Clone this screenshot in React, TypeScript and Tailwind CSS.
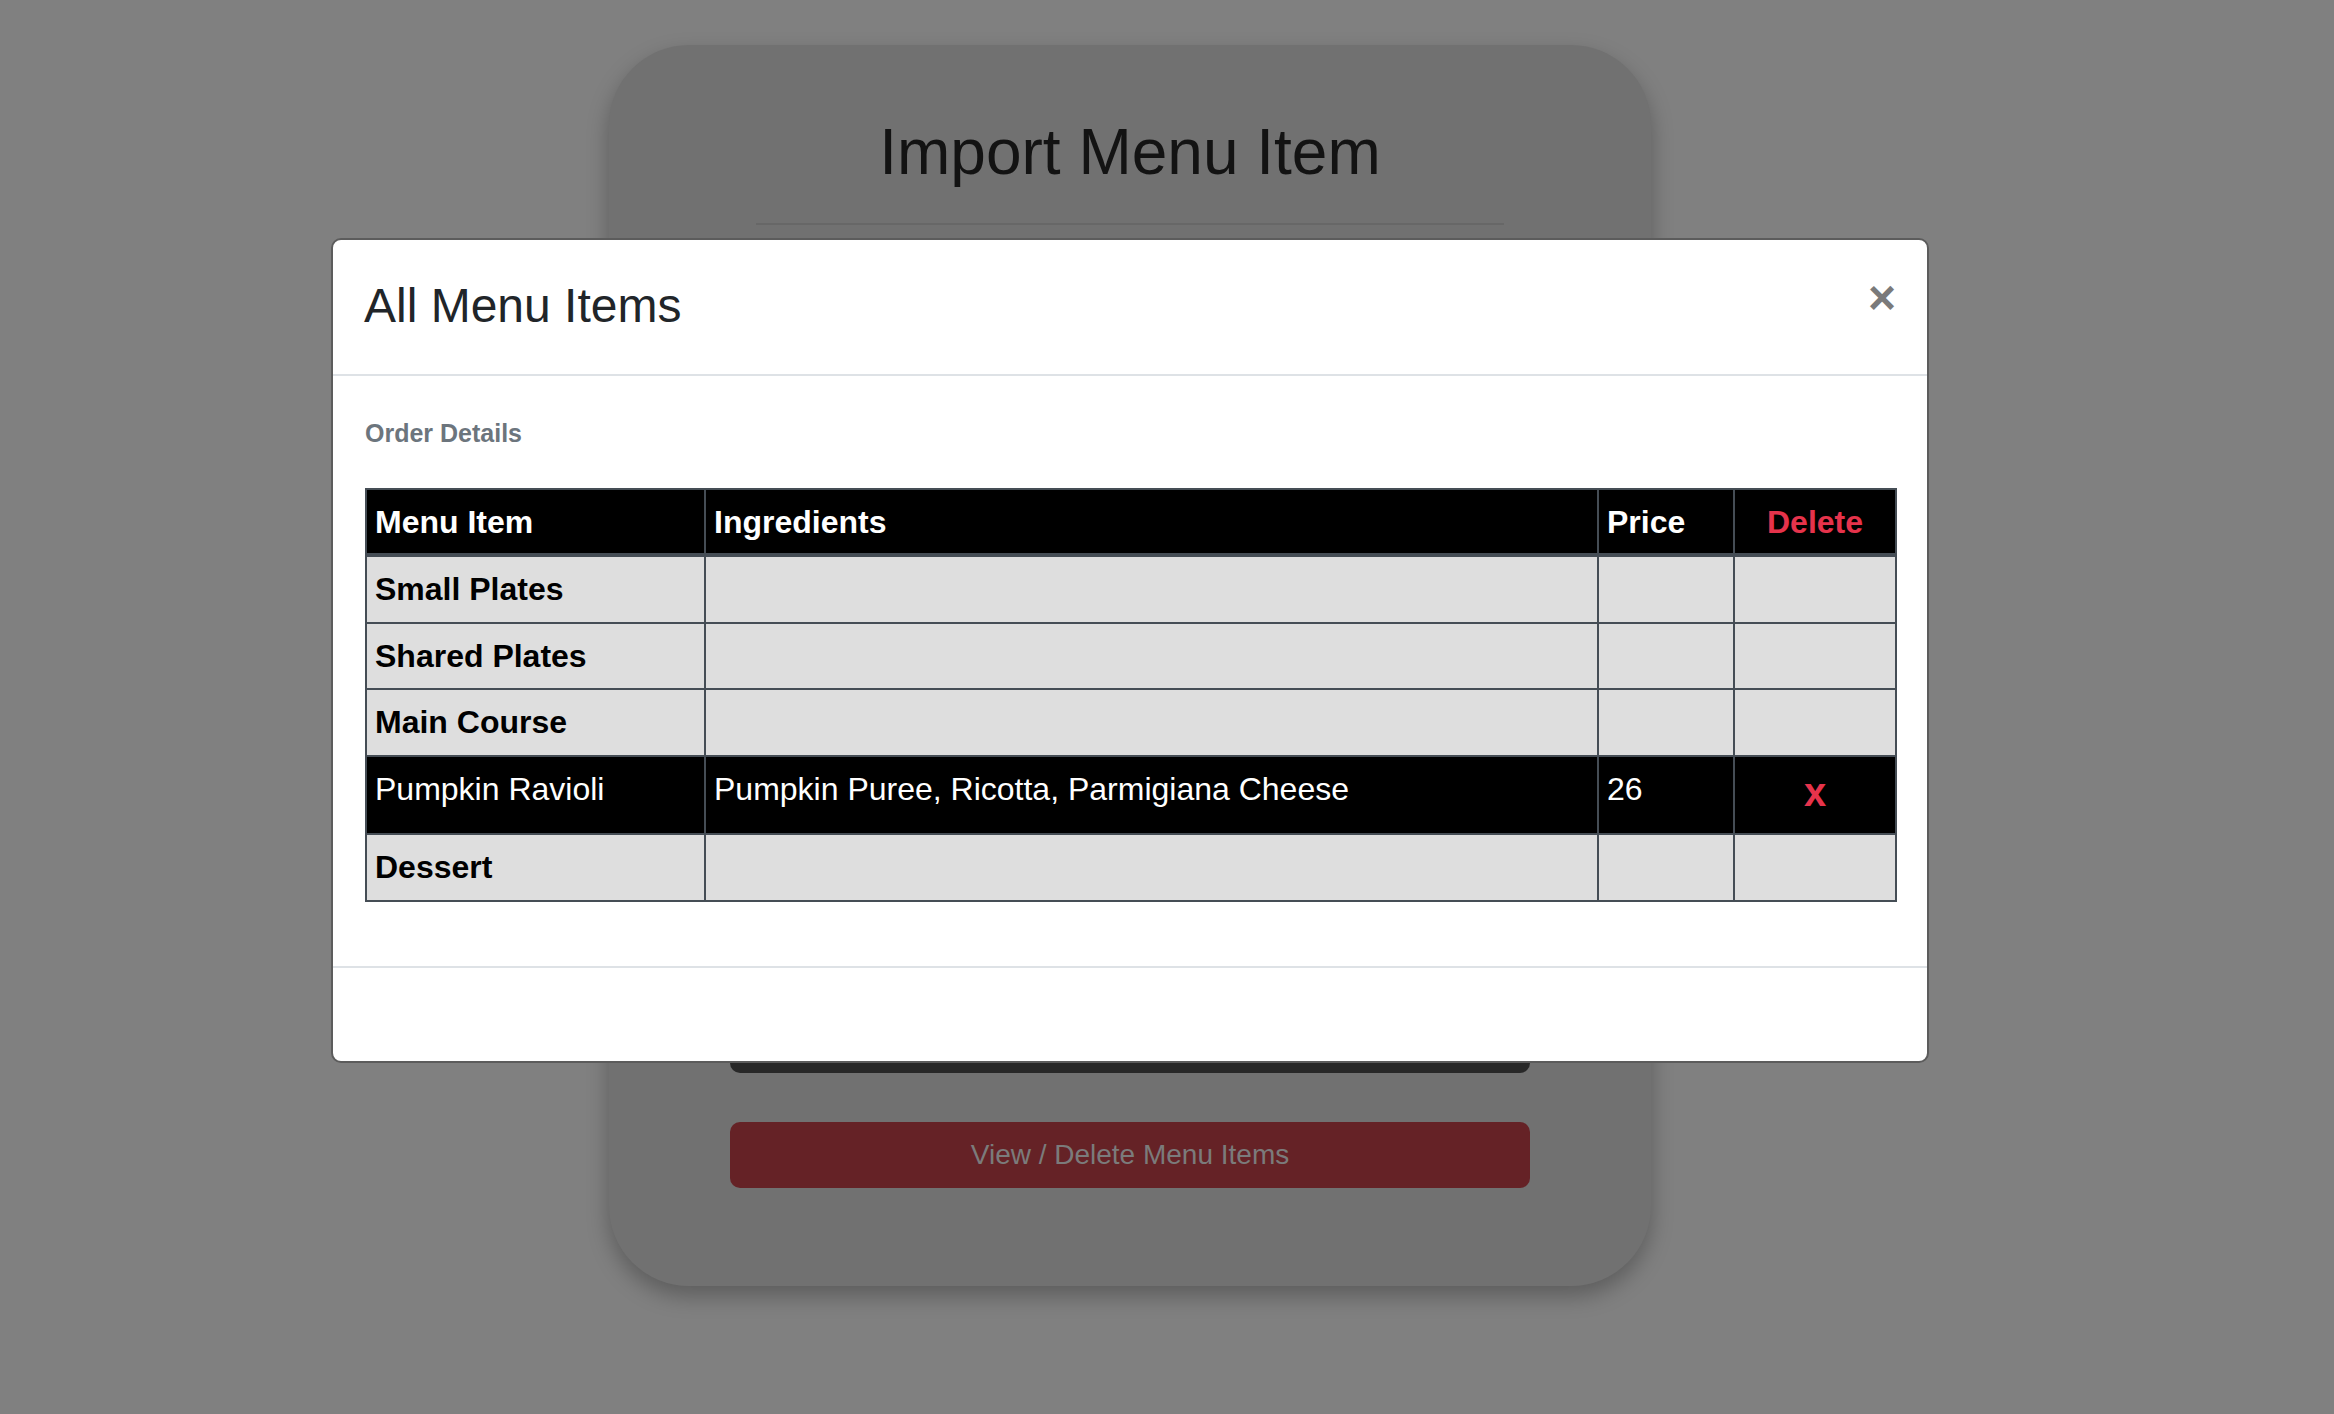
import React from "react";

type Row = {
  item: string;
  ingredients?: string;
  price?: string;
  category: boolean;
};

const ROWS: Row[] = [
  { item: "Small Plates", category: true },
  { item: "Shared Plates", category: true },
  { item: "Main Course", category: true },
  {
    item: "Pumpkin Ravioli",
    ingredients: "Pumpkin Puree, Ricotta, Parmigiana Cheese",
    price: "26",
    category: false,
  },
  { item: "Dessert", category: true },
];

function MenuTable() {
  return (
    <table className="w-full table-fixed border-collapse border-2 border-[#454d55] text-[32px] leading-[48px]">
      <colgroup>
        <col className="w-[339px]" />
        <col className="w-[893px]" />
        <col className="w-[136px]" />
        <col className="w-[162px]" />
      </colgroup>
      <thead>
        <tr className="bg-black text-white">
          <th className="border-2 border-b-4 border-[#454d55] px-[8px] py-[7.5px] text-left align-top font-bold">
            Menu Item
          </th>
          <th className="border-2 border-b-4 border-[#454d55] px-[8px] py-[7.5px] text-left align-top font-bold">
            Ingredients
          </th>
          <th className="border-2 border-b-4 border-[#454d55] px-[8px] py-[7.5px] text-left align-top font-bold">
            Price
          </th>
          <th className="border-2 border-b-4 border-[#454d55] px-[8px] py-[7.5px] text-center align-top font-bold text-[#e6334b]">
            Delete
          </th>
        </tr>
      </thead>
      <tbody>
        {ROWS.map((row) =>
          row.category ? (
            <tr key={row.item} className="bg-[#dedede] text-black">
              <td className="border-2 border-[#454d55] px-[8px] py-[8.25px] align-top font-bold">
                {row.item}
              </td>
              <td className="border-2 border-[#454d55] px-[8px] py-[8.25px]" />
              <td className="border-2 border-[#454d55] px-[8px] py-[8.25px]" />
              <td className="border-2 border-[#454d55] px-[8px] py-[8.25px]" />
            </tr>
          ) : (
            <tr key={row.item} className="bg-black text-white">
              <td className="border-2 border-[#454d55] px-[8px] py-[8.25px] align-top">
                {row.item}
              </td>
              <td className="border-2 border-[#454d55] px-[8px] py-[8.25px] align-top">
                {row.ingredients}
              </td>
              <td className="border-2 border-[#454d55] px-[8px] py-[8.25px] align-top">
                {row.price}
              </td>
              <td className="border-2 border-[#454d55] px-[8px] py-[8.25px] text-center align-top">
                <button
                  type="button"
                  className="pb-[5px] text-[40px] font-bold leading-[55px] text-[#e6334b]"
                >
                  x
                </button>
              </td>
            </tr>
          )
        )}
      </tbody>
    </table>
  );
}

export default function App() {
  return (
    <div className="relative h-[1414px] w-full overflow-hidden bg-[#808080] font-['Liberation_Sans',Arial,sans-serif]">
      <div className="w-[2260px] pt-[45px]">
        {/* page card, dimmed by the modal backdrop */}
        <div className="mx-auto flex h-[1241px] w-[1042px] flex-col items-center rounded-[80px] bg-[#717171] pt-[67px] pb-[98px] shadow-[0_10px_22px_rgba(0,0,0,0.28)]">
          <h1 className="text-[64px] leading-[80px] text-[#131313]">Import Menu Item</h1>
          <div className="mt-[31px] h-[2px] w-[748px] bg-[#676767]" />
          <div className="mt-auto h-[66px] w-[800px] rounded-[10px] bg-[#282828]" />
          <button
            type="button"
            className="mt-[49px] h-[66px] w-[800px] rounded-[10px] bg-[#652226] text-[28px] text-[#7b7b7b]"
          >
            View / Delete Menu Items
          </button>
        </div>
      </div>

      {/* modal */}
      <div className="absolute left-[331px] top-[238px] w-[1598px] rounded-[10px] border-2 border-[#5c5c5c] bg-white">
        <div className="flex items-start justify-between border-b-2 border-[#dee2e6] px-[31px] pt-[30px] pb-[32px]">
          <h4 className="text-[48px] leading-[72px] text-[#212529]">All Menu Items</h4>
          <button
            type="button"
            className="mt-[4px] text-[48px] font-bold leading-none text-[#7a7a7a]"
          >
            ×
          </button>
        </div>
        <div className="px-[32px] pt-[39px] pb-[64px]">
          <div className="mb-[37px] text-[25px] font-bold leading-[36px] text-[#6c757d]">
            Order Details
          </div>
          <MenuTable />
        </div>
        <div className="h-[95px] border-t-2 border-[#dee2e6]" />
      </div>
    </div>
  );
}
